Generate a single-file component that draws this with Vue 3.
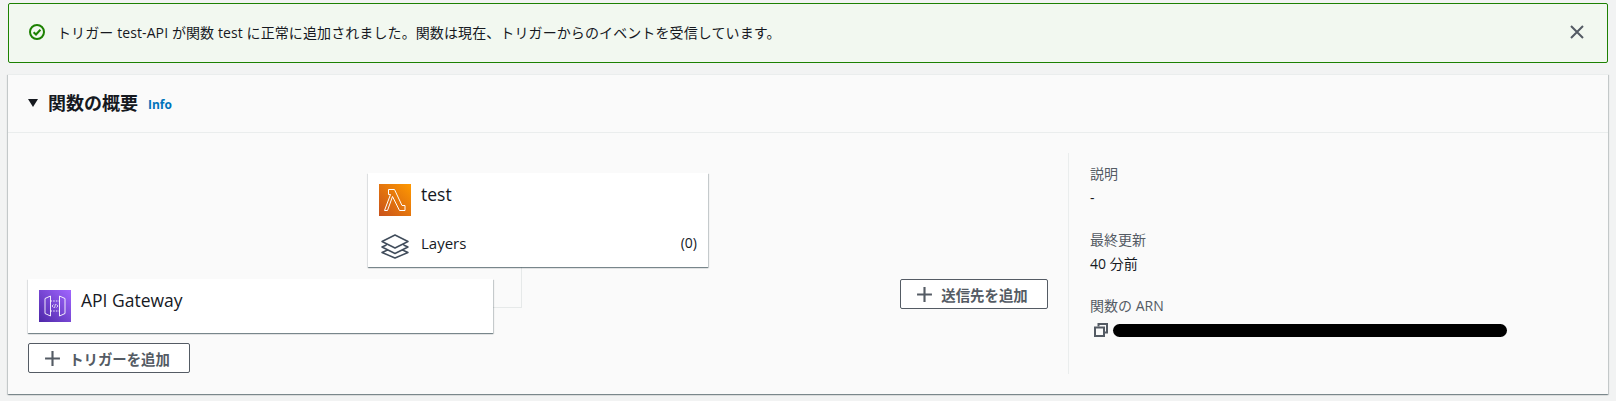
<script setup>
const details = [
  { label: '説明', value: '-' },
  { label: '最終更新', value: '40 分前' }
]
</script>

<template>
  <div class="page">
    <div class="flash">
      <svg class="flash__icon" viewBox="0 0 16 16" width="16" height="16">
        <circle cx="8" cy="8" r="7" fill="none" stroke="#1d8102" stroke-width="2" />
        <path d="M4.6 8.2 7 10.5 11.4 5.8" fill="none" stroke="#1d8102" stroke-width="2" />
      </svg>
      <span class="flash__text">トリガー test-API が関数 test に正常に追加されました。関数は現在、トリガーからのイベントを受信しています。</span>
      <svg class="flash__close" viewBox="0 0 14 14" width="14" height="14">
        <path d="M1 1 13 13M13 1 1 13" fill="none" stroke="#545b64" stroke-width="2" />
      </svg>
    </div>

    <section class="panel">
      <header class="panel__head">
        <span class="caret"></span>
        <h2 class="panel__title">関数の概要</h2>
        <a class="info">Info</a>
      </header>

      <div class="panel__body">
        <div class="diagram">
          <div class="connector"></div>

          <div class="node node--fn">
            <div class="node__row node__row--main">
              <svg class="svc-icon" viewBox="0 0 32 32" width="32" height="32">
                <defs>
                  <linearGradient id="lambdaBg" x1="0" y1="1" x2="1" y2="0">
                    <stop offset="0" stop-color="#c8511b" />
                    <stop offset="1" stop-color="#ff9900" />
                  </linearGradient>
                </defs>
                <rect width="32" height="32" fill="url(#lambdaBg)" />
                <path
                  d="M9.500 5.500H15.500L23 21.500H26V26.500H20.500L13.500 12.500 8.500 26.500H5.500L11.500 10.500H9.500Z"
                  fill="none"
                  stroke="#fff"
                  stroke-width="1"
                  stroke-linejoin="round"
                />
              </svg>
              <span class="node__name">test</span>
            </div>
            <div class="node__row node__row--layers">
              <svg class="layers-icon" viewBox="0 0 28 25" width="28" height="25">
                <path
                  d="M14 1 27 7.500 14 14 1 7.500ZM5.500 11 1 13 14 19.500 27 13 22.500 11M5.500 16.500 1 18.500 14 24 27 18.500 22.500 16.500"
                  fill="none"
                  stroke="#414d5c"
                  stroke-width="1.500"
                  stroke-linejoin="round"
                />
              </svg>
              <span class="layers-label">Layers</span>
              <span class="layers-count">(0)</span>
            </div>
          </div>

          <div class="node node--trigger">
            <svg class="svc-icon" viewBox="0 0 32 32" width="32" height="32">
              <defs>
                <linearGradient id="apiBg" x1="0" y1="1" x2="1" y2="0">
                  <stop offset="0" stop-color="#4d27a8" />
                  <stop offset="1" stop-color="#a166ff" />
                </linearGradient>
              </defs>
              <rect width="32" height="32" fill="url(#apiBg)" />
              <g fill="none" stroke="#fff" stroke-width="0.9">
                <path d="M6 8.500 11.500 6V26L6 23.500Z" />
                <path d="M26 8.500 20.500 6V26L26 23.500Z" />
                <path d="M11.500 11H20.500M11.500 21H20.500" stroke-dasharray="1.500 1.200" />
                <path d="M14.500 14.500 13 16 14.500 17.500M17.500 14.500 19 16 17.500 17.500M16.500 14 15.500 18" stroke-width="0.700" />
              </g>
            </svg>
            <span class="node__name">API Gateway</span>
          </div>

          <button class="btn btn--trigger">
            <svg viewBox="0 0 16 16" width="17" height="17">
              <path d="M8 1V15M1 8H15" fill="none" stroke="#545b64" stroke-width="2" />
            </svg>
            トリガーを追加
          </button>

          <button class="btn btn--dest">
            <svg viewBox="0 0 16 16" width="17" height="17">
              <path d="M8 1V15M1 8H15" fill="none" stroke="#545b64" stroke-width="2" />
            </svg>
            送信先を追加
          </button>
        </div>

        <aside class="side">
          <div v-for="item in details" :key="item.label" class="side__item">
            <div class="side__label">{{ item.label }}</div>
            <div class="side__value">{{ item.value }}</div>
          </div>
          <div class="side__item">
            <div class="side__label">関数の ARN</div>
            <div class="arn">
              <svg viewBox="0 0 14 14" width="14" height="14">
                <path d="M4.500 3.500V1H13V9.500H10.500" fill="none" stroke="#545b64" stroke-width="2" />
                <rect x="1" y="4.500" width="9" height="8.500" fill="none" stroke="#545b64" stroke-width="2" />
              </svg>
              <span class="arn__mask"></span>
            </div>
          </div>
        </aside>
      </div>
    </section>
  </div>
</template>

<style>
html,
body {
  margin: 0;
  background: #f2f3f3;
}
</style>

<style scoped>
.page {
  height: 401px;
  box-sizing: border-box;
  padding: 3px 8px 0;
  display: flex;
  flex-direction: column;
  gap: 11px;
  overflow: hidden;
  font-family: 'Open Sans', 'Noto Sans CJK JP', sans-serif;
  font-size: 14px;
  color: #16191f;
  background: #f2f3f3;
}
.flash {
  height: 60px;
  box-sizing: border-box;
  flex: none;
  display: flex;
  align-items: center;
  padding: 0 23px 2px 20px;
  background: #f2f8f0;
  border: 1px solid #1d8102;
  border-radius: 2px;
}
.flash__icon {
  flex: none;
  margin-right: 12px;
}
.flash__text {
  flex: 1;
  letter-spacing: 0.1px;
}
.flash__close {
  flex: none;
}
.panel {
  height: 319px;
  flex: none;
  display: flex;
  flex-direction: column;
  background: #fafafa;
  border-top: 1px solid #eaeded;
  box-shadow: 0 1px 1px 0 rgba(0, 28, 36, 0.3), 1px 1px 1px 0 rgba(0, 28, 36, 0.15),
    -1px 1px 1px 0 rgba(0, 28, 36, 0.15);
}
.panel__head {
  height: 58px;
  box-sizing: border-box;
  flex: none;
  display: flex;
  align-items: center;
  padding: 0 0 2px 20px;
  border-bottom: 1px solid #eaeded;
}
.caret {
  width: 0;
  height: 0;
  border-left: 5px solid transparent;
  border-right: 5px solid transparent;
  border-top: 8px solid #16191f;
  margin-right: 10px;
}
.panel__title {
  margin: 0;
  font-size: 18px;
  font-weight: 700;
  line-height: 24px;
}
.info {
  margin-left: 10px;
  margin-top: 3px;
  font-size: 12px;
  font-weight: 700;
  color: #0073bb;
}
.panel__body {
  flex: 1;
  display: flex;
  min-height: 0;
}
.diagram {
  width: 1060px;
  flex: none;
  position: relative;
}
.connector {
  position: absolute;
  left: 485px;
  top: 134px;
  width: 28px;
  height: 40px;
  border-right: 1px solid #e6e9e9;
  border-bottom: 1px solid #e6e9e9;
}
.node {
  position: absolute;
  background: #fff;
  box-sizing: border-box;
  box-shadow: 0 1px 1px 0 rgba(0, 28, 36, 0.4), 1px 1px 1px 0 rgba(0, 28, 36, 0.15),
    -1px 1px 1px 0 rgba(0, 28, 36, 0.05);
}
.node--fn {
  left: 360px;
  top: 40px;
  width: 340px;
  height: 94px;
  padding: 11px 11px 0 11px;
  display: flex;
  flex-direction: column;
}
.node--trigger {
  left: 20px;
  top: 146px;
  width: 465px;
  height: 54px;
  padding: 11px 11px 0 11px;
  display: flex;
  align-items: flex-start;
  gap: 10px;
}
.node__row {
  display: flex;
}
.node__row--main {
  gap: 10px;
  align-items: flex-start;
}
.node__row--layers {
  margin-top: 18px;
  align-items: center;
  height: 25px;
}
.svc-icon {
  flex: none;
  display: block;
}
.node__name {
  font-size: 17.500px;
  line-height: 20px;
}
.layers-icon {
  flex: none;
  margin-left: 2px;
  margin-right: 12px;
}
.layers-label {
  flex: 1;
  font-size: 15px;
  margin-top: -8px;
}
.layers-count {
  margin-top: -8px;
}
.btn {
  position: absolute;
  height: 30px;
  box-sizing: border-box;
  display: flex;
  align-items: center;
  justify-content: center;
  gap: 8px;
  padding: 0 4px 0 0;
  background: #fff;
  border: 1px solid #545b64;
  border-radius: 2px;
  font-family: inherit;
  font-size: 14.400px;
  font-weight: 700;
  color: #545b64;
}
.btn--trigger {
  left: 20px;
  top: 210px;
  width: 162px;
}
.btn--dest {
  left: 892px;
  top: 146px;
  width: 148px;
}
.side {
  flex: 1;
  margin: 20px 0;
  padding: 10px 0 0 21px;
  border-left: 1px solid #eaeded;
  display: flex;
  flex-direction: column;
  gap: 20px;
}
.side__label {
  font-size: 14px;
  line-height: 22px;
  color: #545b64;
}
.side__value {
  margin-top: 2px;
  line-height: 22px;
}
.arn {
  display: flex;
  align-items: center;
  gap: 5px;
  margin-top: 2px;
  height: 22px;
  padding-left: 4px;
}
.arn svg {
  flex: none;
}
.arn__mask {
  width: 394px;
  height: 13px;
  background: #000;
  border-radius: 7px;
}
</style>
